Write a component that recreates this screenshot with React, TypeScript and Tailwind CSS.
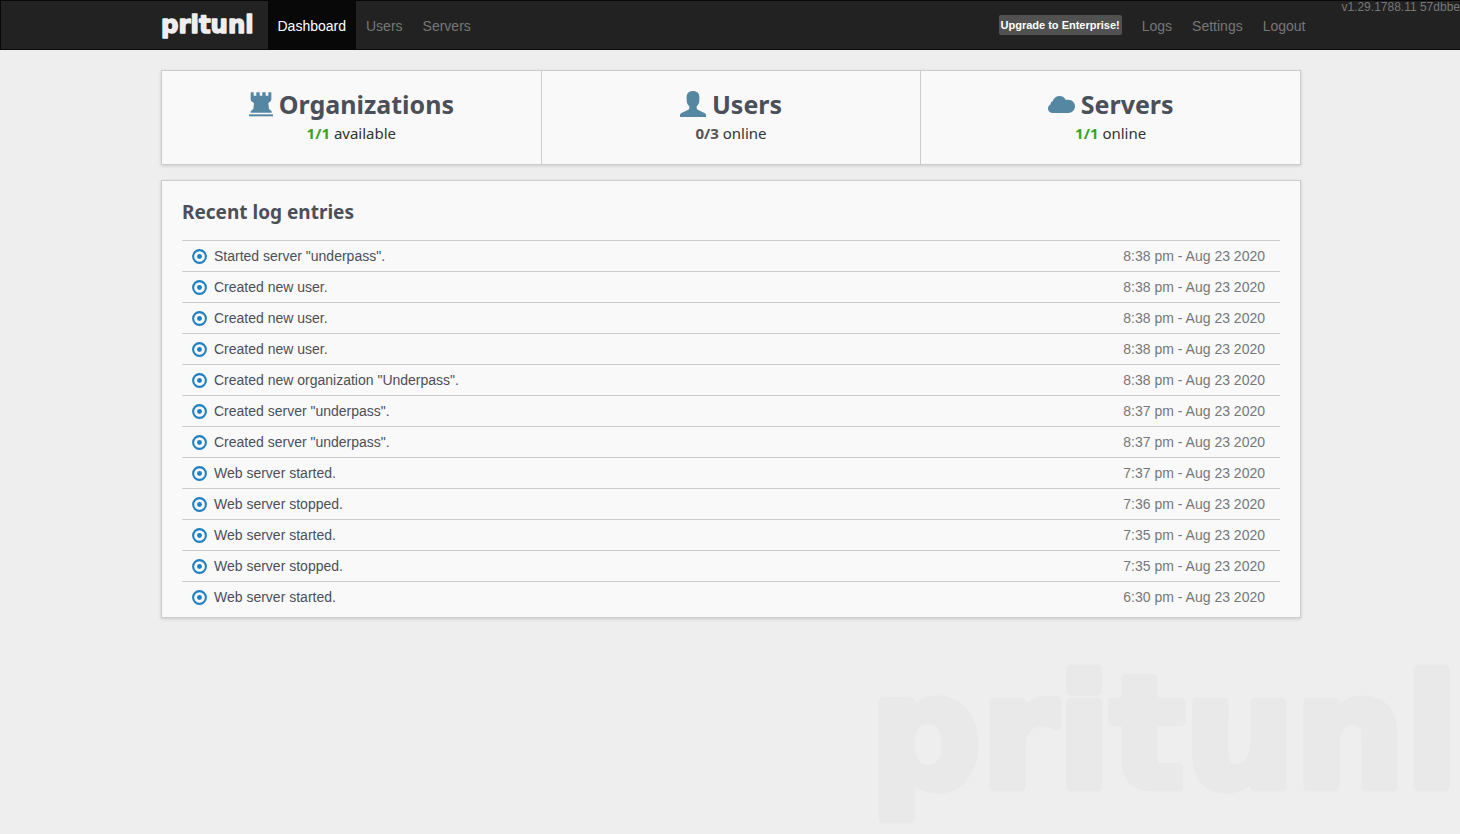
import type { ReactNode } from "react";

type LogEntry = { message: string; time: string };

const entries: LogEntry[] = [
  { message: 'Started server "underpass".', time: "8:38 pm - Aug 23 2020" },
  { message: "Created new user.", time: "8:38 pm - Aug 23 2020" },
  { message: "Created new user.", time: "8:38 pm - Aug 23 2020" },
  { message: "Created new user.", time: "8:38 pm - Aug 23 2020" },
  { message: 'Created new organization "Underpass".', time: "8:38 pm - Aug 23 2020" },
  { message: 'Created server "underpass".', time: "8:37 pm - Aug 23 2020" },
  { message: 'Created server "underpass".', time: "8:37 pm - Aug 23 2020" },
  { message: "Web server started.", time: "7:37 pm - Aug 23 2020" },
  { message: "Web server stopped.", time: "7:36 pm - Aug 23 2020" },
  { message: "Web server started.", time: "7:35 pm - Aug 23 2020" },
  { message: "Web server stopped.", time: "7:35 pm - Aug 23 2020" },
  { message: "Web server started.", time: "6:30 pm - Aug 23 2020" },
];

function Wordmark({ className }: { className: string }) {
  return (
    <svg viewBox="0 0 584 184" className={className} overflow="visible" aria-hidden="true">
      <text
        x="-6"
        y="137"
        fontFamily="'DejaVu Sans', sans-serif"
        fontWeight="700"
        fontSize="155"
        fill="currentColor"
        stroke="currentColor"
        strokeWidth="9"
        strokeLinejoin="round"
      >
        pritunl
      </text>
    </svg>
  );
}

function TowerIcon() {
  return (
    <svg viewBox="0 0 72 75" className="h-[25px] w-6 fill-[#5586a2]" aria-hidden="true">
      <path d="M5 1h9v10h8V1h10v10h8V1h10v10h8V1h9v21q0 5-4 7l-5 4 2 18 8 7v4H5v-4l8-7 2-18-6-4q-4-2-4-7z" />
      <path d="M0 67h72v6H0z" />
    </svg>
  );
}

function UserIcon() {
  return (
    <svg viewBox="0 0 78 78" className="size-[26px] fill-[#5586a2]" aria-hidden="true">
      <path d="M39 0c12 0 19 7 19 17v11c0 9-4 14-8 18v5c0 2 1 4 3 5l19 9c4 2 6 4 6 7v6H0v-6c0-3 2-5 6-7l19-9c2-1 3-3 3-5v-5c-4-4-8-9-8-18V17C20 7 27 0 39 0z" />
    </svg>
  );
}

function CloudIcon() {
  return (
    <svg viewBox="0 0 81 51" className="h-[17px] w-[27px] fill-[#5586a2]" aria-hidden="true">
      <path d="M15 51C6 51 0 45 0 38c0-6 3-11 8-13 0-5 2-8 6-9C17 6 25 0 35 0c8 0 15 5 19 12 2-1 4-1 7-1 12 0 20 9 20 20S72 51 61 51z" />
    </svg>
  );
}

function RecordIcon() {
  return (
    <svg viewBox="0 0 16 16" className="size-[15px] shrink-0" aria-hidden="true">
      <circle cx="8" cy="8" r="6.8" fill="none" stroke="#1f7fc0" strokeWidth="2.2" />
      <circle cx="8" cy="8" r="2.6" fill="#1f7fc0" />
    </svg>
  );
}

function NavLink({ children, active = false }: { children: ReactNode; active?: boolean }) {
  return (
    <a
      href="#"
      aria-current={active ? "page" : undefined}
      className={
        active
          ? "flex h-full items-center bg-[#080808] px-2.5 pt-0.5 text-white"
          : "flex h-full items-center px-2.5 pt-0.5 text-[#777] hover:text-white"
      }
    >
      {children}
    </a>
  );
}

function Stat({
  icon,
  title,
  count,
  label,
  online = false,
}: {
  icon: ReactNode;
  title: string;
  count: string;
  label: string;
  online?: boolean;
}) {
  return (
    <div className="flex flex-1 flex-col items-center pt-[15px] pb-5 font-['Noto_Sans',sans-serif]">
      <h2 className="flex items-center gap-1.5 text-[25px] leading-9 font-bold text-[#4b4f5a]">
        {icon}
        {title}
      </h2>
      <p className="text-[15px] leading-[22px] text-[#333]">
        <span className={online ? "font-bold text-[#35a51c]" : "font-bold text-[#555]"}>{count}</span>{" "}
        {label}
      </p>
    </div>
  );
}

export default function App() {
  return (
    <div className="relative flex min-h-screen flex-col overflow-hidden bg-[#eee] font-['Liberation_Sans',Arial,sans-serif] text-sm leading-5">
      <Wordmark className="absolute right-0 bottom-0 w-[584px] text-[#e9e9e9]" />

      <header className="relative h-[50px] border-y border-l border-[#080808] bg-[#222]">
        <nav className="mx-auto flex h-full max-w-[1170px] items-stretch pl-4">
          <a href="#" aria-label="pritunl" className="mr-3.5 flex items-center">
            <Wordmark className="w-[92px] text-[#eee]" />
          </a>
          <NavLink active>Dashboard</NavLink>
          <NavLink>Users</NavLink>
          <NavLink>Servers</NavLink>
          <div className="ml-auto flex items-center">
            <button
              type="button"
              className="mr-2.5 h-5 rounded-xs bg-[#515151] px-0.5 text-[11px] leading-5 font-bold text-white"
            >
              Upgrade to Enterprise!
            </button>
            <NavLink>Logs</NavLink>
            <NavLink>Settings</NavLink>
            <NavLink>Logout</NavLink>
          </div>
        </nav>
        <span className="absolute top-0 right-0 text-xs leading-3 text-[#777]">v1.29.1788.11 57dbbe</span>
      </header>

      <main className="relative mx-auto flex w-full max-w-[1170px] flex-col gap-[15px] pt-5 pr-3.5 pl-4">
        <section className="flex divide-x divide-[#ccc] border border-[#ccc] bg-[#f9f9f9] shadow-[0_1px_3px_rgba(0,0,0,0.15)]">
          <Stat icon={<TowerIcon />} title="Organizations" count="1/1" label="available" online />
          <Stat icon={<UserIcon />} title="Users" count="0/3" label="online" />
          <Stat icon={<CloudIcon />} title="Servers" count="1/1" label="online" online />
        </section>

        <section className="border border-[#ccc] bg-[#f9f9f9] px-5 pt-[17px] pb-[5px] shadow-[0_1px_3px_rgba(0,0,0,0.15)]">
          <h3 className="mb-3.5 font-['Noto_Sans',sans-serif] text-[19px] leading-7 font-bold text-[#4b4f5a]">
            Recent log entries
          </h3>
          <ul>
            {entries.map((entry, index) => (
              <li key={index} className="flex h-[31px] items-center gap-[7px] border-t border-[#ccc] pr-[15px] pl-2.5">
                <RecordIcon />
                <span className="text-[#4b4f5a]">{entry.message}</span>
                <time className="ml-auto text-[#777]">{entry.time}</time>
              </li>
            ))}
          </ul>
        </section>
      </main>
    </div>
  );
}
